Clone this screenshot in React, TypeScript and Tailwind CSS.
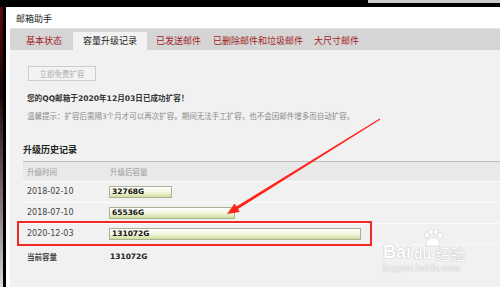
import React from "react";

const cjk = { fontFamily: "'Noto Sans CJK SC', sans-serif" };
const mixed = { fontFamily: "'DejaVu Sans', 'Noto Sans CJK SC', sans-serif" };

const tabs = [
  { label: "基本状态", gap: "ml-[16px]" },
  { label: "容量升级记录", gap: "ml-[11px]", active: true },
  { label: "已发送邮件", gap: "ml-[9px]" },
  { label: "已删除邮件和垃圾邮件", gap: "ml-[12px]" },
  { label: "大尺寸邮件", gap: "ml-[11px]" },
];

const history = [
  { date: "2018-02-10", size: 32768 },
  { date: "2018-07-10", size: 65536 },
  { date: "2020-12-03", size: 131072 },
];

const MAX = 131072;
const FULL = 252;

function Bar({ size }: { size: number }) {
  return (
    <div
      className="h-[12px] border border-[#a3b592] bg-gradient-to-b from-white via-[#f3f6df] to-[#d2dc9e] flex items-center pl-[2px]"
      style={{ width: Math.round((size / MAX) * FULL) }}
    >
      <span className="text-[7.5px] font-bold text-[#111] leading-none" style={mixed}>
        {size}G
      </span>
    </div>
  );
}

function Watermark() {
  const glow = "0 0 1px #b5b5b5, 0 0 1px #b5b5b5";
  return (
    <div className="absolute left-[383px] top-[229px] w-[95px] h-[46px] text-white select-none">
      <svg className="absolute left-[39px] top-[0px]" width="22" height="18" viewBox="0 0 22 18">
        <g fill="#ffffff" stroke="#cfcfcf" strokeWidth="0.6">
          <ellipse cx="5" cy="6" rx="2.4" ry="3" />
          <ellipse cx="9" cy="3" rx="2.4" ry="3" />
          <ellipse cx="14" cy="3" rx="2.4" ry="3" />
          <ellipse cx="18" cy="6.5" rx="2.4" ry="3" />
          <path d="M4 17 C4 11 8 8.5 11 8.5 C14 8.5 18 11 18 17 Z" />
        </g>
      </svg>
      <div className="absolute left-[0px] top-[14px] flex items-end leading-none" style={{ textShadow: glow }}>
        <span className="text-[18px] font-bold" style={{ fontFamily: "'Liberation Sans', sans-serif" }}>
          Bai
        </span>
        <span className="text-[14px] font-bold ml-[3px]" style={{ fontFamily: "'Liberation Sans', sans-serif" }}>
          du
        </span>
        <span className="text-[15px] ml-[4px]" style={cjk}>
          经验
        </span>
      </div>
      <div
        className="absolute left-[0px] top-[34px] text-[9.5px] leading-none"
        style={{ fontFamily: "'Liberation Sans', sans-serif", textShadow: glow }}
      >
        jingyan.baidu.com
      </div>
    </div>
  );
}

export default function App() {
  return (
    <div className="relative w-[500px] h-[287px] overflow-hidden bg-black" style={cjk}>
      {/* top band */}
      <div className="h-[7px] flex">
        <div className="flex-1" />
        <div className="w-[132px] h-[3px] bg-[#cacaca]" />
      </div>

      <div className="flex h-[280px]">
        <div className="w-[3px] bg-gradient-to-b from-[#5c0c0c] via-[#1c0505] via-30% to-[#d9d9d9]" />
        <div className="w-[3px] bg-black" />
        <div className="flex-1 bg-white pl-[4px] flex flex-col">
          {/* title */}
          <div className="h-[21px] flex items-center pt-[3px] pl-[6px] text-[9px] text-[#222]">邮箱助手</div>

          {/* tabs */}
          <div className="h-[22px] bg-[#d5d5d5] border-t border-[#e2e2e2] flex items-end">
            {tabs.map((t) =>
              t.active ? (
                <div
                  key={t.label}
                  className={`${t.gap} h-[18px] px-[10px] bg-[#f2f2f2] flex items-center text-[9px] text-[#222]`}
                >
                  {t.label}
                </div>
              ) : (
                <div key={t.label} className={`${t.gap} h-[18px] flex items-center text-[9px] text-[#a3211e]`}>
                  {t.label}
                </div>
              )
            )}
          </div>

          {/* content */}
          <div className="flex-1 bg-[#f1f1f1] pl-[13px] flex flex-col">
            <div className="pl-[4px]">
              <button
                type="button"
                className="mt-[16px] ml-[1px] h-[15px] w-[68px] border border-[#cdcdcd] bg-[#f3f3f3] text-[7.5px] text-[#ababab] flex items-center justify-center"
              >
                立即免费扩容
              </button>
              <div className="mt-[12px] leading-[12px] text-[7.6px] font-bold text-[#333]" style={mixed}>
                您的QQ邮箱于2020年12月03日已成功扩容！
              </div>
              <div className="mt-[6px] leading-[12px] text-[7.5px] text-[#8a8a8a]" style={mixed}>
                温馨提示：扩容后需隔3个月才可以再次扩容。期间无法手工扩容，也不会因邮件增多而自动扩容。
              </div>
            </div>

            <div className="mt-[20px] leading-[14px] text-[9px] font-bold text-[#222]">升级历史记录</div>

            <div className="mt-[4px] border-t border-[#bdbdbd]">
              <div className="h-[19px] bg-[#e9e9e9] flex items-center text-[7.5px] text-[#9a9a9a]">
                <div className="w-[86px] pl-[4px]">升级时间</div>
                <div className="pl-[1px]">升级后容量</div>
              </div>
              {history.map((r) => (
                <div key={r.date} className="h-[21px] border-t border-[#fbfbfb] flex items-center">
                  <div className="w-[86px] pl-[4px] text-[8px] text-[#444]" style={mixed}>
                    {r.date}
                  </div>
                  <Bar size={r.size} />
                </div>
              ))}
              <div className="h-[24px] border-t border-[#f8f8f8] flex items-center">
                <div className="w-[87px] pl-[4px] text-[7.5px] font-bold text-[#444]">当前容量</div>
                <div className="text-[7.5px] font-bold text-[#222]" style={mixed}>
                  131072G
                </div>
              </div>
            </div>
          </div>
        </div>
      </div>

      {/* annotation: highlight box */}
      <div className="absolute left-[17px] top-[221px] w-[355px] h-[25px] border-2 border-[#ee2b24]" />

      {/* annotation: arrow */}
      <svg className="absolute left-0 top-0" width="500" height="287" viewBox="0 0 500 287">
        <polygon
          fill="#ff2418"
          points="380.3,119.4 238,209 239.8,212 227,214 234.6,203.4 236.4,206.4 379.7,118.6"
        />
      </svg>

      <Watermark />
    </div>
  );
}
